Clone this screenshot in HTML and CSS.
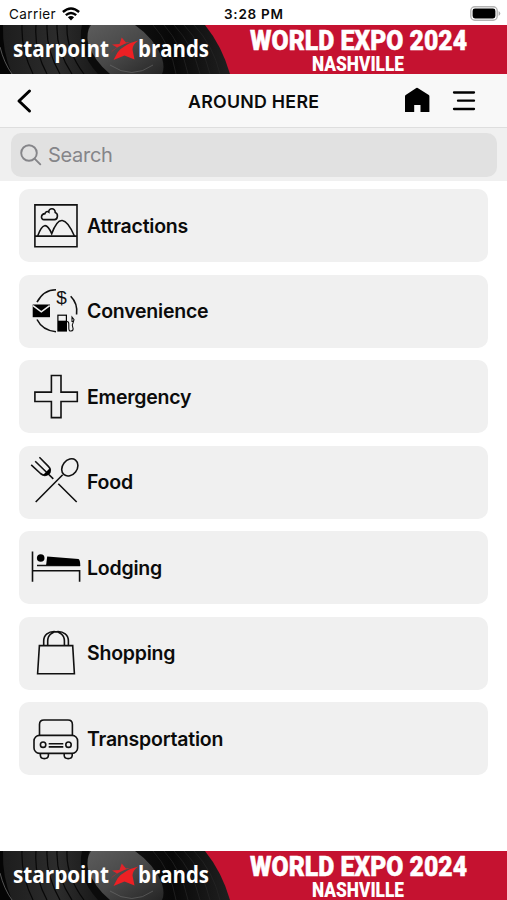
FILE: index.html
```
<!doctype html>
<html lang="en">
<head>
  <meta charset="UTF-8">
  <meta name="viewport" content="width=device-width, initial-scale=1">
  <title>Around Here</title>
  <link rel="stylesheet" href="styles.css">
</head>
<body>
  <!-- shared banner artwork -->
  <svg class="defs" width="0" height="0">
    <defs>
      <linearGradient id="vinyl" x1="0" y1="0" x2="1" y2="0">
        <stop offset="0" stop-color="#1c1c1c"/>
        <stop offset="0.25" stop-color="#2c2c2c"/>
        <stop offset="0.45" stop-color="#161616"/>
        <stop offset="0.75" stop-color="#080808"/>
        <stop offset="1" stop-color="#202020"/>
      </linearGradient>
      <linearGradient id="label" x1="0" y1="0" x2="1" y2="1">
        <stop offset="0" stop-color="#5c5c5c"/>
        <stop offset="0.5" stop-color="#484848"/>
        <stop offset="1" stop-color="#252525"/>
      </linearGradient>
      <symbol id="banner-art" viewBox="0 0 507 49">
        <rect width="507" height="49" fill="#c51230"/>
        <path d="M0 0H205Q222 21 230 49H0Z" fill="url(#vinyl)"/>
        <path d="M0 0H3Q2 26 12 49H0Z" fill="#050505"/>
        <path d="M0 22Q4 38 12 49" fill="none" stroke="#777" stroke-width=".7"/>
        <g fill="none" stroke="#080808" stroke-width="1.2">
          <path d="M22 0Q21 25 33 49M36 0Q34 25 47 49M47 0Q46 25 60 49M57 0Q56 25 72 49M67 0Q66 25 84 49"/>
        </g>
        <path d="M82 0H89Q84 28 111 49H98Q76 25 82 0Z" fill="#0b0b0b"/>
        <path d="M91 0H135Q155 14 162 33Q165 43 162 49H110Q94 36 88 18Q86 7 91 0Z" fill="url(#label)"/>
        <path d="M110 40Q132 55 153 40" fill="none" stroke="#777" stroke-width=".5"/>
        <g fill="none" stroke="#262626" stroke-width=".7">
          <path d="M153 0Q171 20 176 49M164 0Q182 20 188 49M174 0Q193 20 200 49M184 0Q203 20 210 49M194 0Q213 20 220 49"/>
        </g>
        <path d="M138.5 15.5Q132.500 19.500 132.500 24.500L134.500 34.500L124.500 30.500L113.500 35L117.500 27.500Q124 19 138.500 15.500Z" fill="#ed2024"/>
        <path d="M110.500 28Q113 24.500 117 22.500L112 19.500L119.500 19L121.700 12.500L126 17.500L130 17Q118 20.500 110.500 28Z" fill="#e0252a"/>
      </symbol>
    </defs>
  </svg>

  <div class="status">
    <span class="carrier">Carrier</span>
    <svg class="wifi" width="18" height="14" viewBox="0 0 18 14">
      <g fill="none" stroke="#000" stroke-width="2.4">
        <path d="M.9 5Q9-2 17.1 5"/>
        <path d="M3.8 8.2Q9 3.8 14.2 8.2"/>
      </g>
      <path d="M9 13.6L5.9 10.3Q9 7.8 12.1 10.3Z"/>
    </svg>
    <span class="time">3:28 PM</span>
    <svg class="battery" width="31" height="15" viewBox="0 0 31 15">
      <rect x=".8" y=".8" width="26.4" height="13.4" rx="4" fill="#fff" stroke="#b4b4b4" stroke-width="1.4"/>
      <rect x="2.6" y="2.6" width="22.8" height="9.8" rx="2.4"/>
      <path d="M28.6 5Q32 7.5 28.6 10Z" fill="#aaa"/>
    </svg>
  </div>

  <div class="banner">
    <svg width="507" height="49" viewBox="0 0 507 49">
      <use href="#banner-art" width="507" height="49"/>
      <text class="brand" x="13" y="32" textLength="96" lengthAdjust="spacingAndGlyphs">starpoint</text>
      <text class="brand" x="138" y="32" textLength="71" lengthAdjust="spacingAndGlyphs">brands</text>
      <text class="expo" x="250" y="25" textLength="217" lengthAdjust="spacingAndGlyphs">WORLD EXPO 2024</text>
      <text class="city" x="312" y="45.500" textLength="92" lengthAdjust="spacingAndGlyphs">NASHVILLE</text>
    </svg>
  </div>

  <header class="navbar">
    <svg class="back" width="18" height="26" viewBox="0 0 18 26">
      <path d="M14.5 3L4 13L14.5 23" fill="none" stroke="#000" stroke-width="3" stroke-linecap="round" stroke-linejoin="round"/>
    </svg>
    <h1>AROUND HERE</h1>
    <svg class="home" width="26" height="26" viewBox="0 0 26 26">
      <path d="M1 9.4Q1 8.6 1.7 8.1L12.3 1Q13 .6 13.7 1L24.8 8.1Q25.4 8.6 25.4 9.4V25H16.5V18H10.2V25H1Z"/>
    </svg>
    <svg class="menu" width="24" height="22" viewBox="0 0 24 22">
      <path d="M2 2.5H22M6 10.7H22M2 19H22" stroke="#000" stroke-width="2.3" stroke-linecap="round"/>
    </svg>
  </header>

  <div class="searchbar">
    <div class="search">
      <svg width="22" height="22" viewBox="0 0 22 22">
        <g fill="none" stroke="#858589" stroke-width="1.9" stroke-linecap="round">
          <circle cx="9" cy="9" r="7.8"/>
          <path d="M14.8 14.8L20.3 20.3"/>
        </g>
      </svg>
      <span>Search</span>
    </div>
  </div>

  <main class="list">
    <div class="item">
      <svg class="icon" viewBox="0 0 50 50">
        <path d="M3.9 3.9H46V45.7H3.9ZM3.9 35.1H46"/>
        <path d="M6.7 35Q13.5 15.5 20.7 32.8Q30.5 5 43.4 35"/>
        <path d="M13 18.6C9.500 18.6 9.500 13 14 12.600C14.200 10.600 16.500 10 17.800 11C17.500 6.500 24.500 6.800 24.200 11.400C27.500 12.5 27 18.6 23.5 18.6Z"/>
      </svg>
      <span>Attractions</span>
    </div>
    <div class="item">
      <svg class="icon" viewBox="0 0 50 50">
        <path d="M6 16.2Q12.5 3.8 25 3.7M39.7 10.2Q47 17.5 45.6 28.5M6 33.5Q11.5 44.5 25 45.7"/>
        <text class="dollar" x="30.4" y="18.2" text-anchor="middle">$</text>
        <path class="solid" d="M1.7 18.5H19V31.2H1.7Z"/>
        <path class="fold" d="M2 19.7L10.3 25.8L18.7 19.7"/>
        <path class="solid" d="M26.3 28.6H36V45.6H26.3Z"/>
        <path fill="#f0f0f0" stroke="none" d="M27.5 29.8H34.8V34.7H27.5Z"/>
        <path stroke-width="1.1" d="M36 35.5Q38 35.5 37.8 39V42.5Q38 45.3 40 45Q43 44.5 41.8 41.5Q40.6 39 42 37L43 33.5L41 31V35.5H43"/>
      </svg>
      <span>Convenience</span>
    </div>
    <div class="item">
      <svg class="icon" viewBox="0 0 50 50">
        <path d="M20.4 3.5H30V20.1H46.3V29.5H30V45.6H20.4V29.5H3.9V20.1H20.4Z"/>
      </svg>
      <span>Emergency</span>
    </div>
    <div class="item">
      <svg class="icon" viewBox="0 0 50 50">
        <path d="M.2 7.8L9.5 16.5Q14 20 17.6 16.7Q21 13 17.4 9.4L8.4.3M4.2 4.3L15 14.8L22.3 21.9M27.3 26.8L45.7 45M4.7 45L31.7 17.8"/>
        <path class="solid" d="M12 18L19 11L19.5 16L17 18Z"/>
        <ellipse cx="38.8" cy="10.4" rx="7.3" ry="9.3" transform="rotate(38 38.8 10.4)"/>
      </svg>
      <span>Food</span>
    </div>
    <div class="item">
      <svg class="icon" viewBox="0 0 50 50">
        <path d="M1.5 8.5V38.8M1.5 27.8H48.6V38.8M6 22.5H49"/>
        <circle class="solid" cx="9.7" cy="15" r="3.8"/>
        <path class="solid" d="M16.2 13.5L47.5 16Q49.3 17 49.3 23L15.1 22Z"/>
      </svg>
      <span>Lodging</span>
    </div>
    <div class="item">
      <svg class="icon" viewBox="0 0 50 50">
        <path d="M8.4 17.6H41.7L43.4 45.7H6.6Z"/>
        <path d="M12.7 17.6V13C12.7 .4 33.4 .4 33.4 13V17.6M16.7 17.6V13C16.7 .4 37.4 .4 37.4 13V17.6"/>
      </svg>
      <span>Shopping</span>
    </div>
    <div class="item">
      <svg class="icon" viewBox="0 0 50 50">
        <path d="M8.5 21.4V10.5Q8.5 6 13 6H37Q41.4 6 41.4 10.5V21.4"/>
        <rect x="3" y="21.4" width="43.6" height="18" rx="5.5"/>
        <circle cx="12.1" cy="30.7" r="2.7"/>
        <circle cx="37.5" cy="30.7" r="2.7"/>
        <path d="M17.7 29.8H32.3M17.7 32.9H32.3"/>
        <path d="M9.4 39.4V41.5Q9.6 44.6 13.3 44.6Q17.2 44.6 17.4 41.5V39.4M33.2 39.4V41.5Q33.4 44.6 37.2 44.6Q41 44.6 41.2 41.5V39.4"/>
      </svg>
      <span>Transportation</span>
    </div>
  </main>

  <footer class="banner">
    <svg width="507" height="49" viewBox="0 0 507 49">
      <use href="#banner-art" width="507" height="49"/>
      <text class="brand" x="13" y="32" textLength="96" lengthAdjust="spacingAndGlyphs">starpoint</text>
      <text class="brand" x="138" y="32" textLength="71" lengthAdjust="spacingAndGlyphs">brands</text>
      <text class="expo" x="250" y="25" textLength="217" lengthAdjust="spacingAndGlyphs">WORLD EXPO 2024</text>
      <text class="city" x="312" y="45.500" textLength="92" lengthAdjust="spacingAndGlyphs">NASHVILLE</text>
    </svg>
  </footer>
</body>
</html>
```
FILE: styles.css
```
* {
  box-sizing: border-box;
}
body {
  margin: 0;
  height: 900px;
  display: flex;
  flex-direction: column;
  background: #fff;
  color: #0b0b0b;
  font-family: Inter, "Liberation Sans", sans-serif;
  overflow: hidden;
}
svg {
  display: block;
  flex: none;
}
.defs {
  position: absolute;
}

/* status bar */
.status {
  height: 25px;
  display: grid;
  grid-template-columns: 53px 162px 1fr 31px;
  align-items: center;
  padding: 2px 6px 0 9px;
  font-size: 13.5px;
}
.carrier {
  letter-spacing: 0.4px;
}
.time {
  font-weight: 600;
  letter-spacing: 0.75px;
  font-size: 13.5px;
}

.wifi {
  grid-area: 1 / 2;
}
.time {
  grid-area: 1 / 3;
}
.battery {
  grid-area: 1 / 4;
}

/* banners */
.banner {
  height: 49px;
  flex: none;
}
.banner text {
  fill: #fff;
}
.brand {
  font: 700 22.5px "Open Sans", sans-serif;
}
.expo {
  font: 900 28px Roboto, sans-serif;
  stroke: #fff;
  stroke-width: 0.5;
}
.city {
  font: 900 20.5px Roboto, sans-serif;
}

/* title bar */
.navbar {
  height: 54px;
  display: grid;
  grid-template-columns: 172px 1fr 26px 24px;
  align-items: center;
  padding: 0 31px 0 15px;
  background: #f8f8f8;
  border-bottom: 1px solid #dedede;
}
.navbar h1 {
  margin: 2px 0 0 1px;
  font-size: 17.8px;
  font-weight: 600;
  letter-spacing: 0.25px;
  white-space: nowrap;
}
.home {
  margin: -2px 0 0 -22px;
}

/* search */
.searchbar {
  height: 53px;
  padding: 5px 10px 4px 11px;
  background: #f0f0f0;
}
.search {
  height: 44px;
  display: flex;
  align-items: center;
  gap: 6px;
  padding-left: 9px;
  border-radius: 10px;
  background: #e1e1e1;
  color: #858589;
  font-size: 20px;
  letter-spacing: -0.3px;
}

/* category list */
.list {
  flex: 1;
  display: flex;
  flex-direction: column;
  gap: 12.5px;
  padding: 8.4px 19px 0;
}
.item {
  height: 73px;
  display: flex;
  align-items: center;
  gap: 6px;
  padding-left: 12px;
  border-radius: 10px;
  background: #f0f0f0;
  font-size: 19.5px;
  font-weight: 600;
  letter-spacing: -0.22px;
}
.icon {
  width: 50px;
  height: 50px;
  overflow: visible;
  fill: none;
  stroke: #111;
  stroke-width: 1.6;
}
.icon .solid {
  fill: #000;
  stroke: none;
}
.icon .fold {
  stroke: #f0f0f0;
}
.icon .dollar {
  fill: #111;
  stroke: none;
  font: 400 19px "Liberation Sans", sans-serif;
}
```
